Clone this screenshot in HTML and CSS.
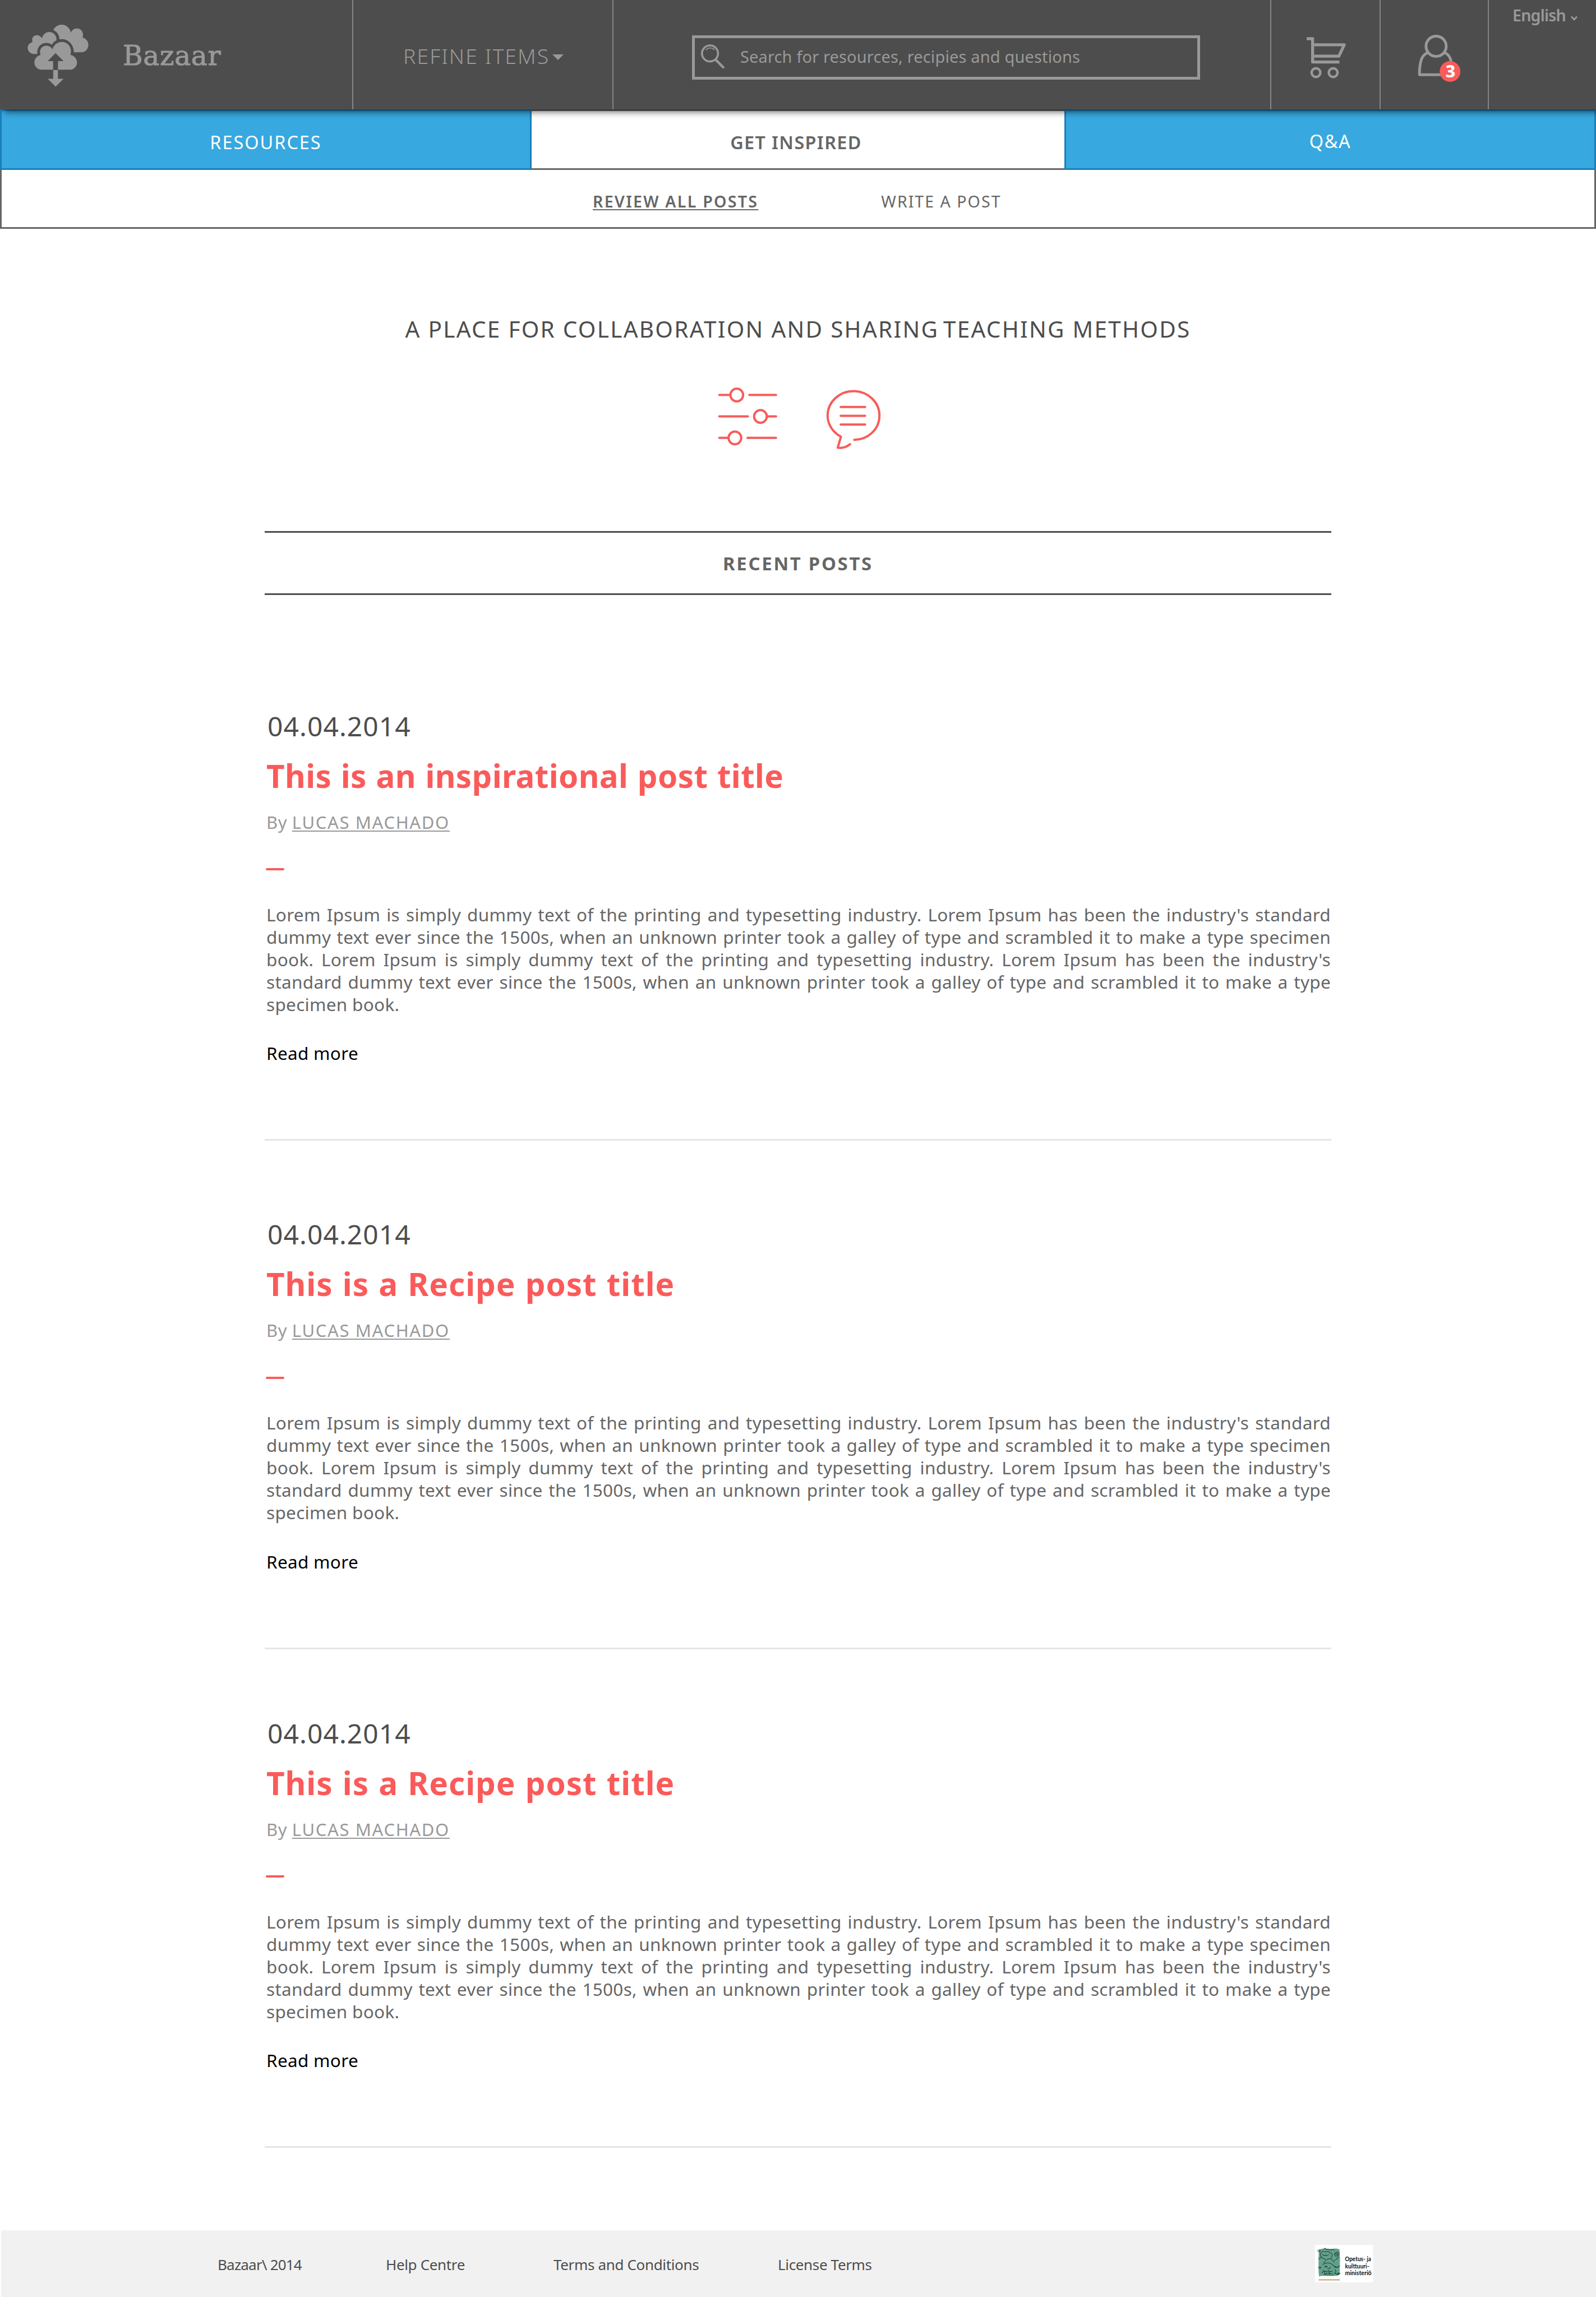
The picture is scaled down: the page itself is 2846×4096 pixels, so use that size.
FILE: index.html
```
<!DOCTYPE html>
<html lang="en">
<head>
<meta charset="utf-8">
<title>Bazaar</title>
<link rel="stylesheet" href="styles.css">
</head>
<body>
<header class="header">
  <a class="brand">
    <svg class="brand-logo" viewBox="0 0 560 600" fill="#999">
      <path d="M248 92C262 66 285 50 313 50C352 50 381 76 388 112C398 92 415 80 437 80C465 80 486 102 486 130C486 138 485 146 481 153C508 158 529 182 529 212C529 245 504 271 472 271H413C412 212 370 165 315 165Q305 165 297 167C297 133 276 104 248 92Z"/>
      <path d="M116 284H92C64 284 42 262 42 236C42 212 58 194 81 190Q78 181 78 171C78 150 94 134 116 134C134 134 150 145 156 160C163 130 186 108 215 108C248 108 273 134 273 165V175C256 182 243 195 236 210C223 201 207 196 190 196C151 196 119 228 119 268V284Z"/>
      <path d="M155 411C122 411 96 385 96 352C96 322 118 297 145 293Q141 281 141 268C141 241 163 218 190 218C214 218 235 230 240 250C250 213 280 188 316 188C357 188 389 220 389 262Q389 280 385 292C414 296 438 322 438 353C438 385 412 411 380 411H285V342H330L265 278L203 342H246V411Z"/>
      <path d="M247 413H285V483H330L266 547L203 483H247Z"/>
    </svg>
    <span class="brand-name">Bazaar</span>
  </a>
  <div class="refine">
    <span class="refine-label">REFINE ITEMS</span>
    <svg class="refine-caret" viewBox="0 0 20 10"><path d="M0 0H20L10 10Z" fill="#999"/></svg>
  </div>
  <div class="search">
    <div class="search-box">
      <svg class="search-icon" viewBox="1870 114 72 74" fill="none" stroke="#999" stroke-linecap="round">
        <circle cx="1898.600" cy="143" r="21.500" stroke-width="5.500"/>
        <path d="M1914 160L1934 180" stroke-width="6.500"/>
        <path d="M1888.500 133A14 14 0 0 1 1909.500 133" stroke-width="2.500"/>
      </svg>
      <span class="search-text">Search for resources, recipies and questions</span>
    </div>
  </div>
  <div class="cart">
    <svg class="cart-icon" viewBox="39 290 320 340" fill="none" stroke="#999" stroke-width="24" stroke-linejoin="round" stroke-linecap="butt">
      <path d="M39 308H87V495H302"/>
      <path d="M99 357H341L298 448H99"/>
      <circle cx="114" cy="580" r="35" stroke-width="20"/>
      <circle cx="252" cy="580" r="35" stroke-width="20"/>
    </svg>
  </div>
  <div class="user">
    <svg class="user-icon" viewBox="930 275 345 385">
      <g fill="none" stroke="#999" stroke-width="22" stroke-linejoin="round">
        <circle cx="1078" cy="372" r="81"/>
        <path d="M1012 424C965 437 945 490 944 600H1130"/>
        <path d="M1144 424C1176 432 1195 465 1200 505"/>
      </g>
      <circle cx="1190" cy="574" r="83" fill="#fa5b5a"/>
      <text class="user-count" x="1194" y="623" text-anchor="middle">3</text>
    </svg>
  </div>
  <div class="language">
    <span class="language-label">English</span>
    <svg class="language-caret" viewBox="0 0 12 9" fill="none" stroke="#999" stroke-width="2.800"><path d="M1 1.500L6 7L11 1.500"/></svg>
  </div>
</header>

<nav class="tabs">
  <a class="tab tab-resources">RESOURCES</a>
  <a class="tab tab-active">GET INSPIRED</a>
  <a class="tab tab-qa">Q&amp;A</a>
</nav>
<nav class="subnav">
  <a class="subnav-link subnav-current">REVIEW ALL POSTS</a>
  <a class="subnav-link">WRITE A POST</a>
</nav>

<main class="main">
  <h1 class="headline">A PLACE FOR COLLABORATION AND SHARING <span class="headline-tight">TEACHING</span> METHODS</h1>
  <div class="tools">
    <svg class="tool-filters" viewBox="50 40 500 520" fill="none" stroke="#f65c5a" stroke-width="18" stroke-linecap="round">
      <path d="M71 109H158M312 109H526M71 281H300M456 281H526M71 453H142M297 453H526"/>
      <circle cx="211" cy="109" r="51"/><circle cx="401" cy="281" r="51"/><circle cx="196" cy="453" r="51"/>
    </svg>
    <svg class="tool-posts" viewBox="910 40 470 520" fill="none" stroke="#f65c5a" stroke-width="18" stroke-linecap="round" stroke-linejoin="round">
      <path d="M1041 205H1237M1041 276H1237M1041 346H1237"/>
      <path d="M1150 469C1262 466 1352 384 1352 274C1352 166 1258 78 1144 78C1029 78 936 166 936 274C936 346 978 408 1043 444L1017 532C1052 538 1086 528 1116 504"/>
    </svg>
  </div>
  <h2 class="section-title">RECENT POSTS</h2>

  <article class="post">
    <time class="post-date">04.04.2014</time>
    <h3 class="post-title">This is an inspirational post title</h3>
    <p class="post-author">By <a class="post-author-link">LUCAS MACHADO</a></p>
    <span class="post-dash"></span>
    <p class="post-text">Lorem Ipsum is simply dummy text of the printing and typesetting industry. Lorem Ipsum has been the industry's standard dummy text ever since the 1500s, when an unknown printer took a galley of type and scrambled it to make a type specimen book. Lorem Ipsum is simply dummy text of the printing and typesetting industry. Lorem Ipsum has been the industry's standard dummy text ever since the 1500s, when an unknown printer took a galley of type and scrambled it to make a type specimen book.</p>
    <a class="post-more">Read more</a>
  </article>

  <article class="post">
    <time class="post-date">04.04.2014</time>
    <h3 class="post-title post-title-recipe">This is a Recipe post title</h3>
    <p class="post-author">By <a class="post-author-link">LUCAS MACHADO</a></p>
    <span class="post-dash"></span>
    <p class="post-text">Lorem Ipsum is simply dummy text of the printing and typesetting industry. Lorem Ipsum has been the industry's standard dummy text ever since the 1500s, when an unknown printer took a galley of type and scrambled it to make a type specimen book. Lorem Ipsum is simply dummy text of the printing and typesetting industry. Lorem Ipsum has been the industry's standard dummy text ever since the 1500s, when an unknown printer took a galley of type and scrambled it to make a type specimen book.</p>
    <a class="post-more">Read more</a>
  </article>

  <article class="post post-last">
    <time class="post-date">04.04.2014</time>
    <h3 class="post-title post-title-recipe">This is a Recipe post title</h3>
    <p class="post-author">By <a class="post-author-link">LUCAS MACHADO</a></p>
    <span class="post-dash"></span>
    <p class="post-text">Lorem Ipsum is simply dummy text of the printing and typesetting industry. Lorem Ipsum has been the industry's standard dummy text ever since the 1500s, when an unknown printer took a galley of type and scrambled it to make a type specimen book. Lorem Ipsum is simply dummy text of the printing and typesetting industry. Lorem Ipsum has been the industry's standard dummy text ever since the 1500s, when an unknown printer took a galley of type and scrambled it to make a type specimen book.</p>
    <a class="post-more">Read more</a>
  </article>
</main>

<footer class="footer">
  <span class="footer-item footer-brand">Bazaar\ 2014</span>
  <a class="footer-item footer-help">Help Centre</a>
  <a class="footer-item footer-terms">Terms and Conditions</a>
  <a class="footer-item footer-license">License Terms</a>
  <svg class="ministry" viewBox="230 186 466 300">
    <rect x="230" y="186" width="466" height="300" fill="#fff"/>
    <path d="M262 222L300 215L345 219L400 215L426 222L430 300L427 428L400 435L330 432L268 436L259 420L258 290Z" fill="#62a28d"/>
    <g fill="none" stroke="#14261f" stroke-width="4.500" stroke-dasharray="10 2">
      <path d="M250 238q12 -18 22 -4q-8 14 -18 6M300 222q12 -18 20 2q20 -10 32 6q18 -12 34 2M278 250q18 -22 36 -6q22 -14 34 8q24 -4 18 24q-4 26 -30 22q-22 18 -34 -4q-24 0 -26 -22q-8 -12 2 -22"/>
      <path d="M290 262q10 14 24 6q12 12 24 -4M386 262q10 -26 34 -14q8 22 -14 28q-18 4 -20 -14M394 262q8 -10 18 -4q0 12 -12 10M420 280q-14 22 -34 30M360 300q14 14 26 26M258 300q16 -6 24 -20"/>
      <path d="M290 344q34 -20 66 -8q20 10 34 30q18 4 40 -14M300 330l14 -14M308 360q10 -8 20 0q-8 10 -20 0M330 374q16 8 26 -12M388 356q12 16 34 6M256 368q12 -10 22 0q-10 12 -22 0"/>
      <path d="M286 410q20 -22 38 -6q10 -16 26 -2q10 -10 24 4M300 424q40 10 84 4M392 384q10 20 -4 30q16 8 36 2M340 390l6 32M296 390q14 10 10 28M412 410l24 6M262 432l8 4M310 418q30 -6 60 0M404 422q10 6 16 -6"/>
    </g>
    <path d="M258 467H429" stroke="#a08b3a" stroke-width="6"/>
    <g class="ministry-text">
      <text x="469" y="318" textLength="210" lengthAdjust="spacingAndGlyphs">Opetus- ja</text>
      <text x="471" y="373" textLength="193" lengthAdjust="spacingAndGlyphs">kulttuuri-</text>
      <text x="471" y="429" textLength="212" lengthAdjust="spacingAndGlyphs">ministeriö</text>
    </g>
  </svg>
</footer>
</body>
</html>
```
FILE: styles.css
```
* { box-sizing: border-box; }
body {
  margin: 0;
  background: #fff;
  color: #4d4d4d;
  font-family: "Noto Sans", "Open Sans", sans-serif;
}
h1, h2, h3, p { margin: 0; font-weight: 400; }
svg { display: block; flex: none; }

/* Header */
.header {
  position: relative;
  z-index: 1;
  display: grid;
  grid-template-columns: 628px 464px 1173px 194.500px 193.500px 193px;
  height: 195px;
  background: #4d4d4d;
  color: #999;
  box-shadow: 7px 5px 11px rgba(0, 0, 0, .55);
}
.refine, .search, .cart, .user, .language { border-left: 2px solid #858585; }
.brand { display: flex; padding-left: 40px; }
.brand-logo { width: 124.500px; height: 133.400px; margin-top: 33.400px; }
.brand-name {
  margin: 68.500px 0 0 54.500px;
  font: 48.500px/60px "DejaVu Serif", serif;
  letter-spacing: .7px;
  -webkit-text-stroke: 1px #999;
}
.refine { display: flex; padding: 69.500px 0 0 89px; }
.refine-label { font-size: 37.300px; line-height: 60px; font-weight: 350; letter-spacing: 2.100px; }
.refine-caret { width: 20px; height: 10px; margin: 27px 0 0 5px; }
.search { padding: 63px 0 0 140px; }
.search-box {
  display: flex;
  align-items: center;
  width: 906px;
  height: 79px;
  padding: 0 0 4px 8px;
  border: 5px solid #999;
}
.search-icon { width: 48px; height: 49.300px; margin-right: 25px; }
.search-text { font-size: 29px; letter-spacing: .15px; }
.cart { padding: 64.500px 0 0 62.500px; }
.cart-icon { width: 71.100px; height: 75.600px; }
.user { padding: 61px 0 0 66px; }
.user-icon { width: 76.700px; height: 85.600px; }
.user-count { font-size: 137px; font-weight: 800; fill: #fff; }
.language { display: flex; padding: 7px 0 0 42px; }
.language-label { font-size: 28.600px; line-height: 40px; font-weight: 600; letter-spacing: -.800px; }
.language-caret { width: 12px; height: 9px; margin: 21px 0 0 9px; }

/* Navigation */
.tabs { display: grid; grid-template-columns: 948px 950px 948px; height: 108px; }
.tab {
  display: flex;
  align-items: center;
  justify-content: center;
  padding-top: 8px;
  background: #37a8e0;
  border: 3px solid #1a80b9;
  color: #fff;
  font-size: 32.400px;
  letter-spacing: 2px;
}
.tab-active {
  background: #fff;
  border-color: #666;
  border-width: 3px 0;
  padding-right: 7px;
  color: #666;
  font-weight: 600;
  letter-spacing: 1.350px;
}
.tab-qa { padding-top: 3px; letter-spacing: 1.600px; }
.subnav {
  display: flex;
  align-items: center;
  gap: 219px;
  height: 105px;
  padding: 8px 0 0 1054px;
  border: 3px solid #666;
  border-top: 0;
  color: #666;
}
.subnav-link { font-size: 28.600px; letter-spacing: 2px; }
.subnav-current {
  font-weight: 600;
  letter-spacing: 2.250px;
  text-decoration: underline 2px;
  text-underline-offset: 3px;
  text-decoration-skip-ink: none;
}

/* Content */
.main { width: 1902px; margin-left: 472px; }
.headline {
  padding-top: 149px;
  text-align: center;
  white-space: nowrap;
  font-size: 40.500px;
  line-height: 60px;
  letter-spacing: 2.250px;
}
.headline-tight { margin-left: -5px; }
.tools { display: flex; gap: 80px; margin: 72px 0 0 806.400px; }
.tool-filters { width: 111.200px; height: 115.600px; }
.tool-posts { width: 104.500px; height: 115.600px; }
.section-title {
  height: 114px;
  margin-top: 142.900px;
  border: solid #4d4d4d;
  border-width: 3px 0;
  color: #666;
  text-align: center;
  font-size: 32.900px;
  line-height: 109px;
  font-weight: 700;
  letter-spacing: 2.700px;
}
.post {
  display: flex;
  flex-direction: column;
  height: 906.300px;
  padding: 0 1px 0 3px;
  margin-top: 203.500px;
}
.post + .post { margin-top: 0; }
.post + .post-last { margin-top: -16.800px; }
.post::after {
  content: "";
  height: 3px;
  margin: 133px -1px 0 -3px;
  background: #e6e6e6;
}
.post-date { padding-left: 2px; font-size: 47.900px; line-height: 60px; letter-spacing: 1.100px; }
.post-title {
  margin-top: 24px;
  color: #fa5b5a;
  font-size: 56.500px;
  line-height: 70px;
  font-weight: 700;
  letter-spacing: .400px;
  word-spacing: 1.500px;
}
.post-title-recipe { letter-spacing: 1px; }
.post-author { margin-top: 27px; color: #999; font-size: 31px; line-height: 40px; letter-spacing: .600px; }
.post-author-link {
  letter-spacing: 1.650px;
  text-decoration: underline 2px;
  text-underline-offset: 3px;
  text-decoration-skip-ink: none;
}
.post-dash { width: 33px; height: 4px; margin: 62.500px 0 0 -1px; border-radius: 2px; background: #fa5b5a; }
.post-text {
  margin-top: 58.300px;
  color: #666;
  font-size: 31.500px;
  line-height: 40px;
  letter-spacing: .300px;
  text-align: justify;
}
.post-more { margin-top: 47.500px; color: #000; font-size: 31.500px; line-height: 40px; letter-spacing: .300px; }

/* Footer */
.footer {
  display: flex;
  height: 119px;
  margin: 10px 0 0 2px;
  background: #f1f1f1;
  font-size: 26px;
  line-height: 40px;
}
.footer-item { margin-top: 41px; letter-spacing: -.350px; white-space: nowrap; }
.footer-brand { width: 300px; margin-left: 386px; letter-spacing: -.800px; }
.footer-help { width: 299px; }
.footer-terms { width: 400px; }
.footer-license { width: 958px; }
.ministry { width: 103.600px; height: 66.700px; margin-top: 26px; }
.ministry-text { font: 700 50px Lato, sans-serif; fill: #111; }
```
